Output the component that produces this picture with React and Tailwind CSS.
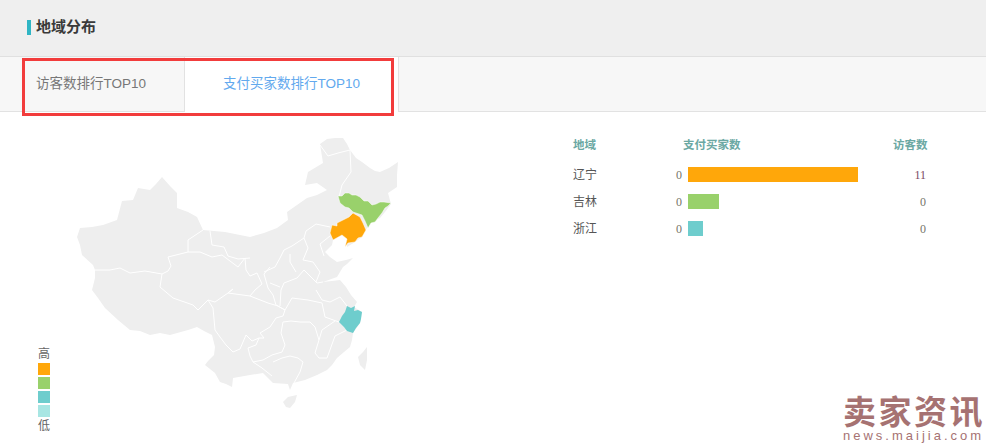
const cjk = { fontFamily: '"Liberation Sans", "Noto Sans CJK SC", sans-serif' }

const rows = [
  { name: "辽宁", bar: "bg-[#ffa70a]", width: 170, visitors: "11", visitorColor: "text-[#7a4a63]" },
  { name: "吉林", bar: "bg-[#99d16b]", width: 31, visitors: "0", visitorColor: "text-[#77756a]" },
  { name: "浙江", bar: "bg-[#6ecdcd]", width: 15, visitors: "0", visitorColor: "text-[#77756a]" },
]

const china =
  "M320 144 L327 139 L335 138 L343 138 L347 144 L350 150 L356 158 L362 162 L370 168 L375 171 L380 172 L389 168 L398 162 L397 175 L397 187 L388 193 L391 204 L385 212 L380 218 L372 222 L367 228 L362 237 L355 242 L347 247 L347 239 L342 235 L333 240 L332 245 L325 252 L330 257 L337 262 L346 260 L353 258 L347 264 L343 267 L337 277 L323 282 L332 281 L340 280 L346 287 L351 295 L357 302 L354 307 L362 312 L360 323 L353 333 L352 340 L350 347 L344 352 L337 358 L332 365 L327 370 L317 375 L305 380 L293 383 L290 390 L288 384 L273 383 L268 378 L263 373 L250 375 L233 378 L232 387 L226 384 L220 382 L215 373 L205 365 L208 361 L214 355 L215 347 L212 335 L204 331 L197 327 L188 330 L170 335 L160 333 L150 335 L140 331 L130 330 L118 320 L105 308 L98 298 L92 290 L95 278 L95 270 L93 265 L82 255 L80 245 L77 237 L80 228 L92 227 L103 225 L117 220 L122 201 L133 200 L138 188 L150 190 L156 184 L162 177 L170 186 L177 193 L177 208 L188 212 L197 217 L203 230 L225 232 L250 237 L264 233 L277 228 L288 220 L287 212 L297 205 L307 198 L317 195 L327 190 L317 183 L305 185 L308 172 L323 163 Z"

const borders = [
  "M203 230 L188 240 L188 252 L168 257 L171 266 L168 271 L162 274 L160 287 L173 298 L193 305 L198 310 L208 300 L213 308 L215 330 L220 337 L226 345 L233 352 L240 349 L246 335 L252 341 L259 338",
  "M95 270 L110 270 L120 268 L130 273 L145 271 L162 274",
  "M188 252 L200 252 L212 257 L222 255 L230 261 L238 267 L245 258 L246 270 L250 276 L257 273 L262 284 L255 290 L250 296 L228 293 L233 289 L228 293 L215 302 L208 300",
  "M210 231 L212 245 L224 247 L228 256 L238 259 L250 258",
  "M250 296 L268 303 L278 306 L285 310 L283 316 L276 318 L270 327 L260 333 L264 338 L259 338 L256 345 L248 348 L250 356 L253 362 L262 368 L272 376",
  "M273 362 L282 358 L290 356 L298 358 L303 362 L300 372 L294 383",
  "M253 362 L263 360 L272 355 L282 352 L285 345 L281 333 L283 322 L291 321 L300 322 L310 322 L315 327 L319 340 L315 353 L319 358 L327 358 L335 336 L347 330",
  "M285 310 L292 298 L308 300 L322 303 L325 317 L339 322",
  "M319 340 L322 330 L335 321",
  "M285 310 L276 305 L273 295 L268 288 L264 274 L270 267",
  "M280 306 L281 290 L284 283 L297 278 L304 270 L317 283 L323 282",
  "M264 272 L275 267 L280 258 L284 250 L292 246 L304 238 L308 248 L303 260 L313 262 L320 272 L316 282",
  "M304 238 L306 231 L316 224 L330 227",
  "M330 236 L320 244 L324 256",
  "M320 145 L328 156 L338 153 L350 150 L351 172 L342 185 L339 197",
  "M316 290 L322 300 L330 302 L340 297 L347 306",
  "M270 283 L280 287",
  "M296 272 L290 262 L290 254",
]

function ChinaMap() {
  return (
    <svg width="573" height="332" viewBox="0 112 573 332" className="block">
      <path d={china} fill="#eeeeee" />
      <path d="M367 347 L363 352 L358 357 L360 365 L365 370 L367 360 Z" fill="#eeeeee" />
      <path d="M297 395 L288 397 L283 402 L286 407 L290 408 L295 402 Z" fill="#eeeeee" />
      {borders.map((d, i) => (
        <path key={i} d={d} fill="none" stroke="#ffffff" strokeWidth="1" strokeLinejoin="round" />
      ))}
      <path
        d="M338 196 L342 196 L345 193 L349 193 L352 195 L356 195 L360 197 L364 201 L368 201 L372 205 L376 204 L380 202 L384 202 L391 203 L388 206 L385 208 L382 213 L378 218 L375 222 L371 223 L368 228 L365 221 L362 215 L353 212 L349 208 L345 207 L340 203 Z"
        fill="#99d16b"
        stroke="#ffffff"
        strokeWidth="0.5"
      />
      <path
        d="M353 213 L360 217 L363 223 L366 230 L362 237 L358 238 L355 242 L348 243 L345 247 L347 239 L342 235 L333 240 L330 233 L332 225 L337 226 L337 223 L343 220 L349 217 Z"
        fill="#ffa70a"
        stroke="#ffffff"
        strokeWidth="0.5"
      />
      <path
        d="M347 306 L351 308 L355 306 L354 311 L358 310 L362 312 L361 319 L360 323 L356 328 L353 333 L347 331 L344 327 L339 322 L342 316 L345 312 Z"
        fill="#6ecdcd"
      />
    </svg>
  )
}

function Legend() {
  return (
    <div className="absolute left-[38px] top-[235px] flex flex-col items-start text-[12px] leading-[14px] text-[#666]">
      <span className="mb-[2px]">高</span>
      <div className="flex flex-col gap-[2px]">
        <div className="w-[12px] h-[12px] bg-[#ffa70a]" />
        <div className="w-[12px] h-[12px] bg-[#99d16b]" />
        <div className="w-[12px] h-[12px] bg-[#6ecdcd]" />
        <div className="w-[12px] h-[12px] bg-[#a8e6e3]" />
      </div>
      <span className="mt-[2px]">低</span>
    </div>
  )
}

function RankTable() {
  return (
    <div className="w-[360px] pt-[26px] text-[12px]">
      <div className="flex h-[14px] items-center font-bold text-[11.5px] text-[#6ba8a3] leading-[14px] mb-[9px] whitespace-nowrap">
        <span className="w-[110px]">地域</span>
        <span className="w-[210px]">支付买家数</span>
        <span>访客数</span>
      </div>
      {rows.map((row) => (
        <div key={row.name} className="flex h-[27px] items-center text-[#555]">
          <span className="w-[103px]">{row.name}</span>
          <span className="w-[12px] text-[#77756a]" style={{ fontFamily: '"Liberation Serif", serif' }}>0</span>
          <div className="w-[205px]">
            <div className={`h-[15px] ${row.bar}`} style={{ width: row.width }} />
          </div>
          <span className={`w-[33px] text-right ${row.visitorColor}`} style={{ fontFamily: '"Liberation Serif", serif' }}>
            {row.visitors}
          </span>
        </div>
      ))}
    </div>
  )
}

export default function App() {
  return (
    <div className="relative w-[986px] h-[444px] overflow-hidden bg-white" style={cjk}>
      <div className="h-[57px] bg-[#efefef] border-b border-[#e0e0e0] flex items-center pl-[27px] pb-[2px]">
        <span className="w-[4px] h-[15px] bg-[#2fb5c4] mr-[5px]" />
        <h2 className="text-[15px] font-bold text-[#3a3a3a]">地域分布</h2>
      </div>

      <div className="h-[55px] bg-[#f7f7f7] border-b border-[#e2e2e2] flex">
        <div className="w-[185px] border-r border-[#e2e2e2] pl-[36px] flex items-center text-[13.5px] text-[#777]">
          访客数排行TOP10
        </div>
        <div className="w-[214px] h-[55px] bg-white border-r border-[#e2e2e2] pl-[38px] flex items-center text-[13.5px] text-[#62a9ee]">
          支付买家数排行TOP10
        </div>
      </div>

      <div className="relative flex">
        <ChinaMap />
        <Legend />
        <RankTable />
      </div>

      {/* annotation box drawn over the tabs */}
      <div className="absolute left-[22px] top-[58px] w-[372px] h-[58px] border-[3px] border-[#f23c3c]" />

      {/* watermark */}
      <div className="absolute left-[843px] top-[396px] w-[143px] text-[#a67272]">
        <div className="text-[33px] leading-[33px] font-bold whitespace-nowrap tracking-[2.5px]">卖家资讯</div>
        <div className="text-[13px] leading-[14px] tracking-[3px] whitespace-nowrap">news.maijia.com</div>
      </div>
    </div>
  )
}
